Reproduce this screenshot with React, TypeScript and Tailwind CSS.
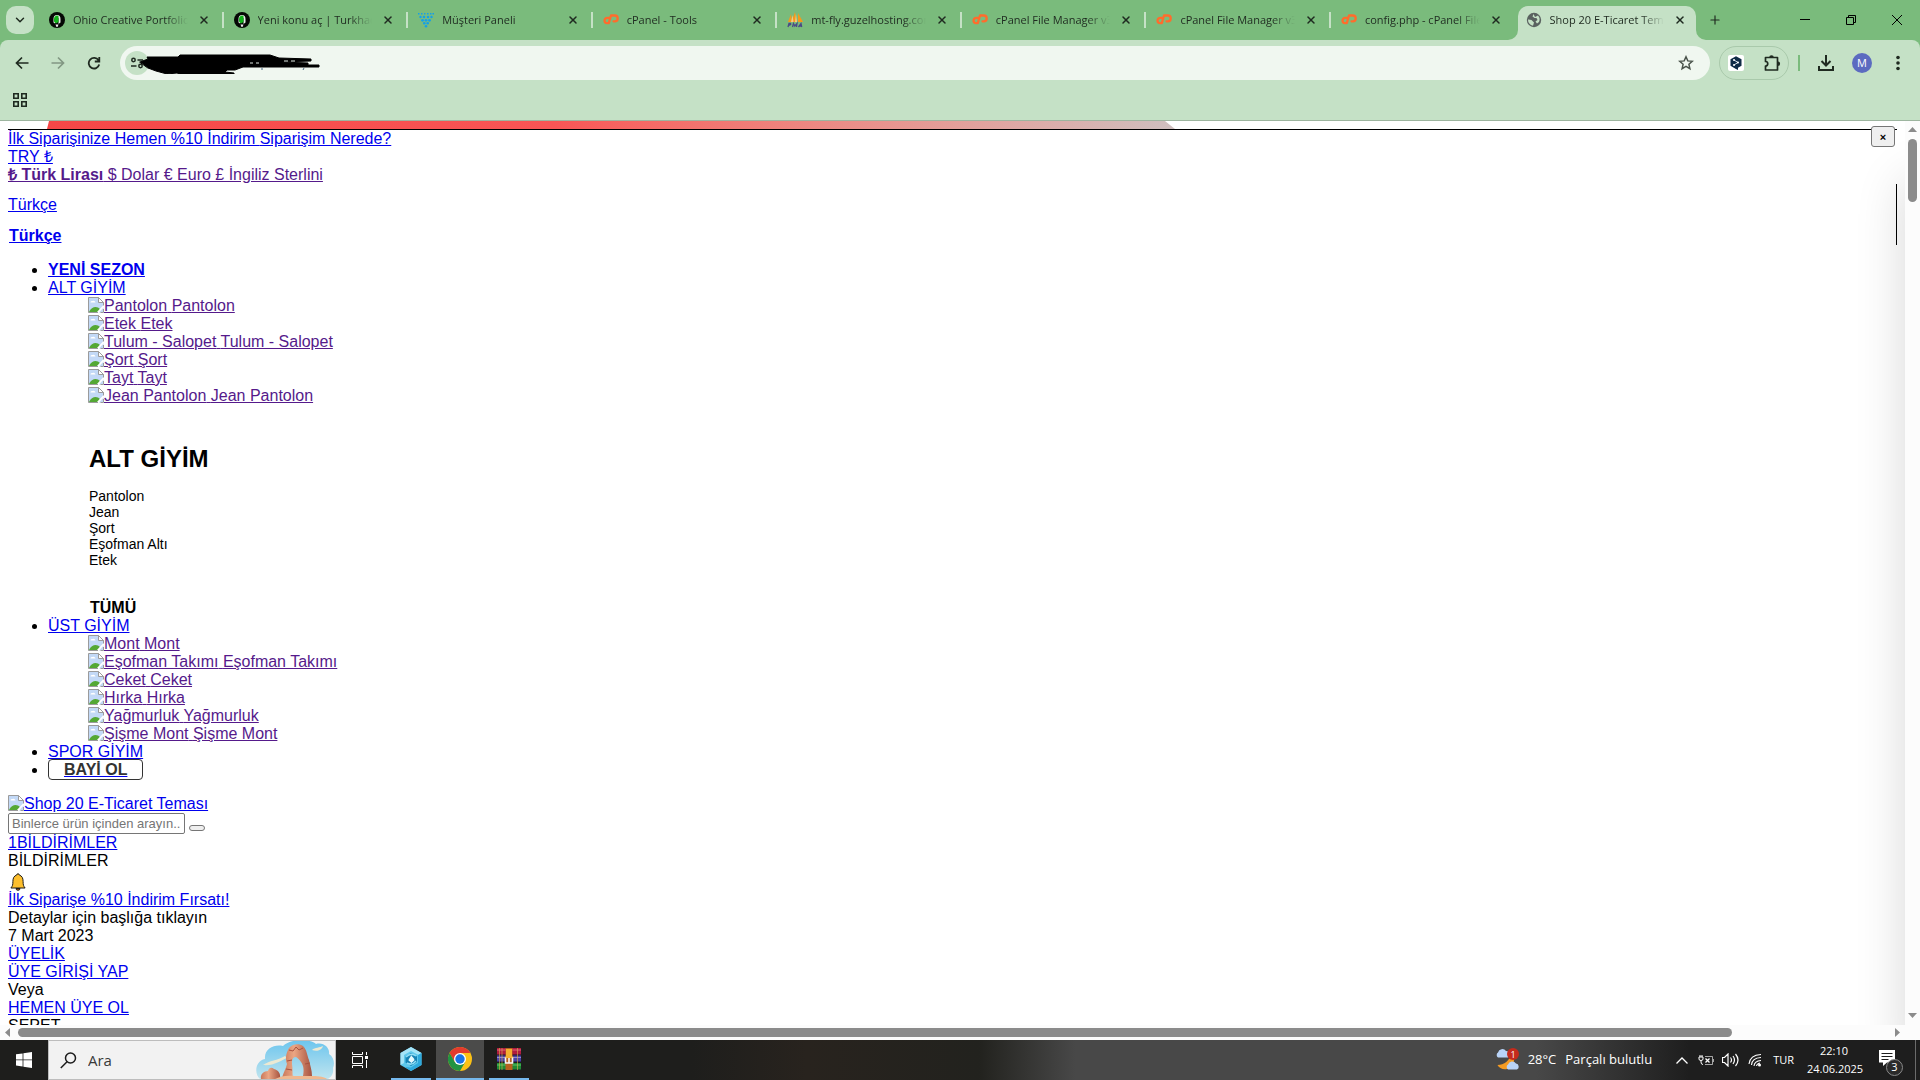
import { type ReactNode } from 'react'
import { ChevronDown, Plus, X } from 'lucide-react'

type TabIcon = 'forum' | 'dots' | 'cpanel' | 'pma' | 'globe'

const TABS: { title: string; icon: TabIcon }[] = [
  { title: 'Ohio Creative Portfolio Theme', icon: 'forum' },
  { title: 'Yeni konu aç | Turkhackteam', icon: 'forum' },
  { title: 'Müşteri Paneli', icon: 'dots' },
  { title: 'cPanel - Tools', icon: 'cpanel' },
  { title: 'mt-fly.guzelhosting.com', icon: 'pma' },
  { title: 'cPanel File Manager v3', icon: 'cpanel' },
  { title: 'cPanel File Manager v3', icon: 'cpanel' },
  { title: 'config.php - cPanel File', icon: 'cpanel' },
  { title: 'Shop 20 E-Ticaret Teması', icon: 'globe' },
]

const BOTTOMS = ['Pantolon', 'Etek', 'Tulum - Salopet', 'Şort', 'Tayt', 'Jean Pantolon']
const FEATURED = ['Pantolon', 'Jean', 'Şort', 'Eşofman Altı', 'Etek']
const TOPS = ['Mont', 'Eşofman Takımı', 'Ceket', 'Hırka', 'Yağmurluk', 'Şişme Mont']

export default function App() {
  return (
    <div className="flex h-screen flex-col overflow-hidden bg-white font-['Open_Sans',sans-serif] text-black">
      <TabStrip />
      <Toolbar />
      <Viewport />
      <Taskbar />
    </div>
  )
}

function TabStrip() {
  return (
    <header className="flex h-10 shrink-0 bg-[#7abb7c] text-[#1f2a20]">
      <button aria-label="Sekmelerde ara" className="mt-[6px] ml-[6px] flex size-7 items-center justify-center rounded-[10px] bg-[#c5e1c6]">
        <ChevronDown size={14} strokeWidth={2.5} />
      </button>
      <div className="ml-[5px] flex min-w-0 flex-1">
        {TABS.map((tab, i) => (
          <Tab key={i} {...tab} active={i === TABS.length - 1} separator={i < TABS.length - 2} />
        ))}
      </div>
      <div className="flex w-[220px] shrink-0 items-center">
        <button aria-label="Yeni sekme" className="ml-[7px] flex size-4 items-center justify-center">
          <Plus size={14} strokeWidth={2} />
        </button>
        <div className="ml-auto flex text-black">
          <button aria-label="Simge durumuna küçült" className="flex h-10 w-[46px] items-center justify-center">
            <svg width="10" height="10"><path d="M0 4.500h10" stroke="currentColor" /></svg>
          </button>
          <button aria-label="Geri yükle" className="flex h-10 w-[46px] items-center justify-center">
            <svg width="10" height="10" fill="none" stroke="currentColor">
              <path d="M.5 2.500h7v7h-7zM2.500 2.500v-2h7v7h-2" />
            </svg>
          </button>
          <button aria-label="Kapat" className="flex h-10 w-[46px] items-center justify-center">
            <svg width="10" height="10" stroke="currentColor"><path d="M0 0l10 10M10 0L0 10" /></svg>
          </button>
        </div>
      </div>
    </header>
  )
}

interface TabProps {
  title: string
  icon: TabIcon
  active: boolean
  separator: boolean
}

function Tab({ title, icon, active, separator }: TabProps) {
  return (
    <div className="relative flex min-w-0 flex-1 items-start">
      {active && (
        <>
          <div className="absolute top-[6px] right-1 bottom-0 left-0.5 rounded-t-[10px] bg-[#c5e1c6]" />
          <svg className="absolute -left-2 bottom-0" width="10" height="10">
            <path d="M10 0v10H0A10 10 0 0 0 10 0z" fill="#c5e1c6" />
          </svg>
          <svg className="absolute -right-1.5 bottom-0" width="10" height="10">
            <path d="M0 0v10h10A10 10 0 0 1 0 0z" fill="#c5e1c6" />
          </svg>
        </>
      )}
      <div className="relative flex h-10 min-w-0 flex-1 items-center pl-[10px]">
        <Favicon icon={icon} />
        <span className="ml-2 min-w-0 flex-1 overflow-hidden mask-[linear-gradient(to_right,#000_80%,transparent)] text-[11px] leading-4 whitespace-nowrap">
          {title}
        </span>
        <button aria-label="Sekmeyi kapat" className="mr-[10px] ml-2 flex size-4 items-center justify-center">
          <X size={12} strokeWidth={3} />
        </button>
        {separator ? <i className="h-4 w-0.5 bg-[#c5e1c6]" /> : <i className="w-0.5" />}
      </div>
    </div>
  )
}

function Favicon({ icon }: { icon: TabIcon }) {
  if (icon === 'forum') {
    return (
      <svg className="shrink-0" width="16" height="16" viewBox="0 0 16 16">
        <circle cx="8" cy="8" r="8" fill="#050805" />
        <path d="M4.500 10.500V7a3.500 4 0 0 1 7 0v3.500L9.500 12V5.500L6 11.500z" fill="#e8eee8" />
        <path d="M5 9.500V6.500a3 3.200 0 0 1 4.500-2.500v6L7 11.500z" fill="#12b31a" />
        <path d="M6.500 12.500h3L8.500 15h-1z" fill="#f4f4f4" />
      </svg>
    )
  }
  if (icon === 'dots') {
    return (
      <svg className="shrink-0" width="16" height="16" viewBox="0 0 16 16" fill="#14a0e8">
        <path d="M0 1h1.500v1.500H0zM3 1h1.500v1.500H3zM6 1h1.500v1.500H6zM9 1h1.500v1.500H9zM12 1h1.500v1.500H12zM14.500 1H16v1.500h-1.500z" />
        <circle cx="2.500" cy="5" r="1.200" /><circle cx="6" cy="5" r="1.300" /><circle cx="10" cy="5" r="1.300" /><circle cx="13.500" cy="5" r="1.200" />
        <circle cx="4.500" cy="8.300" r="1.400" /><circle cx="8" cy="8.300" r="1.400" /><circle cx="11.500" cy="8.300" r="1.400" />
        <circle cx="6.300" cy="11.300" r="1.300" /><circle cx="9.700" cy="11.300" r="1.300" /><circle cx="8" cy="14.300" r="1.300" />
      </svg>
    )
  }
  if (icon === 'cpanel') {
    return (
      <svg className="shrink-0" width="16" height="16" viewBox="0 0 16 16" fill="none" stroke="#ff6c2c" strokeWidth="2.300" strokeLinecap="round">
        <path d="M6 5.800H4.200a2.600 2.600 0 0 0 0 5.300h1.600L8 3.500h3.800a2.900 2.900 0 0 1 0 5.800H10.500" strokeLinejoin="round" />
      </svg>
    )
  }
  if (icon === 'pma') {
    return (
      <svg className="shrink-0" width="16" height="16" viewBox="0 0 16 16">
        <path d="M4 2L1 10h4zM8 0L4.500 10H10zM11 1v9h5z" fill="#f59a1c" />
        <path d="M5.500 3L4 10h2.500zM9 2l-1 8h2z" fill="#f7c987" />
        <path d="M1 15l1-3.500h1.500q1 1-1.800 1.800M5.500 15l1-3.500 1.300 2.500L10 11.500 9.500 15M11.500 15l2.500-3.500.7 3.500M12.500 14h2" stroke="#4b4a86" strokeWidth="1.300" fill="none" />
      </svg>
    )
  }
  return (
    <svg className="shrink-0" width="16" height="16" viewBox="0 0 16 16">
      <circle cx="8" cy="8" r="7.200" fill="#5a6260" />
      <path d="M2.500 7.500l3 .5 2.500 2.500-1 3.200A6 6 0 0 1 2 7.500zM7.500 2l-1 2.500 2 1.500h2l1 2-2 1.500 1.500 2 2-1.500a6 6 0 0 0-1-6.500L9 5z" fill="#c5e1c6" />
    </svg>
  )
}

function Toolbar() {
  return (
    <div className="shrink-0 bg-[#7abb7c]">
      <div className="rounded-t-[8px] border-b border-[#9db59f] bg-[#c5e1c6] pt-[6px] text-[#1f2a20]">
        <div className="flex h-[34px] items-center pl-[13px]">
          <button aria-label="Geri" className="flex size-[18px] items-center justify-center"><Arrow /></button>
          <button aria-label="İleri" className="ml-[18px] flex size-[18px] rotate-180 items-center justify-center opacity-40"><Arrow /></button>
          <button aria-label="Yenile" className="ml-[18px] flex size-[18px] items-center justify-center">
            <svg width="14" height="14" viewBox="0 0 14 14" fill="none" stroke="currentColor" strokeWidth="1.800">
              <path d="M11.500 4.300A5.300 5.300 0 1 0 12.200 8.500M12.300 1v4.500H7.800" />
            </svg>
          </button>
          <div className="relative ml-[17px] flex h-[34px] min-w-0 flex-1 items-center rounded-full bg-[#f0f7f0] pl-[5px]">
            <button aria-label="Site bilgileri" className="flex size-6 shrink-0 items-center justify-center rounded-full bg-[#c5e1c6]">
              <svg width="14" height="14" viewBox="0 0 14 14" fill="none" stroke="currentColor" strokeWidth="1.500">
                <circle cx="3.500" cy="4" r="1.700" /><circle cx="10.500" cy="10" r="1.700" /><path d="M7.500 4H13M1 10h5.500" />
              </svg>
            </button>
            <input aria-label="Adres çubuğu" className="h-6 min-w-0 flex-1 bg-transparent px-2 outline-none" />
            {/* blacked out address */}
            <svg className="absolute top-[8px] left-[18px]" width="184" height="20" viewBox="0 0 184 20">
              <path d="M2 8l8-3-1-2h31l2-2h90l9 3 32 1v2l-30 1 27 1v2h11v2h-76l-8 3h-8l-2 2 9 1v2H44l-5-2-10 1-11-3-8-3z" fill="#000" stroke="#000" strokeLinejoin="round" strokeLinecap="round" />
              <path d="M112 9h3M118 9h3M146 7h4M153 7h4" stroke="#dfe8e2" strokeWidth="1" />
              <path d="M124 14v2M166 14l-1 2" stroke="#4a6a85" />
            </svg>
            <button aria-label="Yer işareti ekle" className="mr-4 flex size-4 items-center justify-center text-[#4a534b]">
              <svg width="16" height="16" viewBox="0 0 16 16" fill="none" stroke="currentColor" strokeWidth="1.500">
                <path d="M8 1.800l1.800 4.100 4.500.4-3.400 3 1 4.400L8 11.400l-3.900 2.300 1-4.400-3.400-3 4.500-.4z" />
              </svg>
            </button>
          </div>
          <div className="ml-[9px] flex h-[34px] w-[70px] items-center justify-between rounded-full border border-[#a9c9ab] px-2">
            <button aria-label="Çeviri" className="flex size-4 items-center justify-center rounded-xs bg-white">
              <svg width="12" height="14" viewBox="0 0 12 14">
                <path d="M6 .3l5.500 3v6.500L8 11.700V14l-2.500-1.300L.5 9.800V3.300z" fill="#0f2b46" />
                <path d="M4 4l4 2.500L4 9" stroke="#d5e0ea" fill="none" />
                <circle cx="4" cy="4" r="1" fill="#fff" /><circle cx="8" cy="6.500" r="1" fill="#fff" /><circle cx="4" cy="9" r="1" fill="#fff" />
              </svg>
            </button>
            <button aria-label="Uzantılar" className="flex size-4 items-center justify-center">
              <svg width="18" height="18" viewBox="0 0 18 18" className="shrink-0">
                <path d="M2.500 3.500H14.500v12.500H2.500v-4a2.200 2.200 0 0 0 0-4.500z" fill="none" stroke="currentColor" strokeWidth="1.700" strokeLinejoin="round" />
                <path d="M6.200 3.500a2.300 2.300 0 0 1 4.600 0zM14.800 7.400a2.300 2.300 0 0 1 0 4.600z" fill="currentColor" />
              </svg>
            </button>
          </div>
          <i className="ml-[9px] h-4 w-0.5 bg-[#7abb7c]" />
          <button aria-label="İndirilenler" className="ml-[18px] size-4">
            <svg width="16" height="16" viewBox="0 0 16 16" fill="none" stroke="currentColor" strokeWidth="2">
              <path d="M8 0v10M3.500 6L8 10.500 12.500 6M1 11v4h14v-4" />
            </svg>
          </button>
          <button className="ml-[18px] flex size-5 items-center justify-center rounded-full bg-[#5c6bc0] text-[11px] text-white">M</button>
          <button aria-label="Menü" className="mr-[14px] ml-[18px] flex size-4 items-center justify-center">
            <svg width="4" height="16" fill="currentColor">
              <circle cx="2" cy="2.500" r="1.800" /><circle cx="2" cy="8" r="1.800" /><circle cx="2" cy="13.500" r="1.800" />
            </svg>
          </button>
        </div>
        <div className="flex h-10 items-center pl-[13px]">
          <button aria-label="Uygulamalar" className="size-[14px]">
            <svg width="14" height="14" fill="none" stroke="currentColor" strokeWidth="1.600">
              <path d="M.8.8h4.400v4.400H.8zM8.800.8h4.400v4.400H8.800zM.8 8.800h4.400v4.400H.8zM8.800 8.800h4.400v4.400H8.800z" />
            </svg>
          </button>
        </div>
      </div>
    </div>
  )
}

function Arrow() {
  return (
    <svg width="14" height="14" viewBox="0 0 14 14" fill="none" stroke="currentColor" strokeWidth="1.700">
      <path d="M13.500 7H1.500M7 1.500L1.500 7 7 12.500" />
    </svg>
  )
}

function Viewport() {
  return (
    <div className="grid min-h-0 flex-1 grid-cols-[1fr_15px] grid-rows-[1fr_15px] bg-[#fcfcfc]">
      <main className="relative overflow-hidden bg-white px-2 font-['Liberation_Sans',Arial,sans-serif] text-base leading-[18px]">
        <div className="ml-[39px] h-2 w-[1128px] bg-linear-to-r from-[#f54747] via-[#f95555] via-45% to-[#cfbfbf] [clip-path:polygon(2px_0,1118px_0,100%_100%,0_100%)]" />
        <hr className="border-black" />
        <ShopPage />
        <button className="absolute top-[5px] right-[10px] flex h-[21px] w-6 items-center justify-center rounded-[3px] border border-[#767676] bg-[#efefef] text-[11px] font-bold">
          ×
        </button>
        <div className="absolute top-[63px] right-2 h-[61px] w-px bg-black" />
        <div className="absolute top-[60px] -bottom-10 left-full w-20 shadow-[0_0_50px_rgba(0,0,0,0.16)]" />
      </main>
      <div className="flex flex-col items-center justify-between pt-[6px] pb-[7px]">
        <svg width="9" height="5" fill="#8b8b8b"><path d="M0 5l4.500-5L9 5z" /></svg>
        <div className="mt-[7px] mb-auto h-[63px] w-[9px] rounded-full bg-[#8b8b8b]" />
        <svg width="9" height="5" fill="#8b8b8b"><path d="M0 0l4.500 5L9 0z" /></svg>
      </div>
      <div className="flex items-center px-[5px]">
        <svg width="5" height="9" fill="#8b8b8b"><path d="M5 0L0 4.500 5 9z" /></svg>
        <div className="mr-[163px] ml-2 h-[9px] flex-1 rounded-full bg-[#8b8b8b]" />
        <svg width="5" height="9" fill="#8b8b8b"><path d="M0 0l5 4.500L0 9z" /></svg>
      </div>
    </div>
  )
}

function Link({ children, visited, bold }: { children: ReactNode; visited?: boolean; bold?: boolean }) {
  return (
    <a href="#" className={`underline ${visited ? 'text-[#551a8b]' : 'text-[#0000ee]'} ${bold ? 'font-bold' : ''}`}>
      {children}
    </a>
  )
}

function BrokenImage() {
  return (
    <svg className="inline-block align-top" width="16" height="16" viewBox="0 0 16 16">
      <path d="M.5.5h10l5 5v10H.5z" fill="#c3d9f7" />
      <path d="M2.500 5.500a1.500 1.500 0 0 1 2-1.500 2 2 0 0 1 3 1.500z" fill="#fff" />
      <path d="M1 15c2-4.500 6-6 9-4.500l2 1.500-2 3z" fill="#54a834" />
      <path d="M16 7.500V10l-5.500 6H8z" fill="#fff" />
      <path d="M10 15.500H.5V.5h10l5 5v3M15.500 12v3.500h-3" fill="none" stroke="#9b9b9b" />
      <path d="M10.500.5v5h5z" fill="#fff" stroke="#9b9b9b" />
    </svg>
  )
}

function CategoryLinks({ items }: { items: string[] }) {
  return (
    <ul className="ml-10">
      {items.map((item) => (
        <li key={item} className="list-none">
          <Link visited><BrokenImage />{item} {item}</Link>
        </li>
      ))}
    </ul>
  )
}

function ShopPage() {
  return (
    <div className="whitespace-nowrap">
      <p><Link>İlk Siparişinize Hemen %10 İndirim </Link><Link>Siparişim Nerede?</Link></p>
      <p><Link>TRY ₺</Link></p>
      <p><Link visited><b>₺ Türk Lirası</b> $ Dolar € Euro £ İngiliz Sterlini</Link></p>
      <p className="mt-3"><Link>Türkçe</Link></p>
      <p className="mt-[13px] pl-px"><Link bold>Türkçe</Link></p>

      <ul className="mt-4 list-disc pl-10">
        <li><Link bold>YENİ SEZON</Link></li>
        <li>
          <Link>ALT GİYİM</Link>
          <CategoryLinks items={BOTTOMS} />
          <div className="mt-10 ml-[41px]">
            <h2 className="text-2xl leading-7 font-bold">ALT GİYİM</h2>
            <div className="mt-[15px] text-sm leading-4">
              {FEATURED.map((item) => <p key={item}>{item}</p>)}
            </div>
            <p className="mt-[31px] pl-px font-bold">TÜMÜ</p>
          </div>
        </li>
        <li>
          <Link>ÜST GİYİM</Link>
          <CategoryLinks items={TOPS} />
        </li>
        <li><Link>SPOR GİYİM</Link></li>
        <li>
          <a href="#" className="rounded-sm border border-[#333] px-[15px] pt-px pb-px font-bold text-[#333] underline decoration-[#0000ee]">BAYİ OL</a>
        </li>
      </ul>

      <p className="mt-4"><Link><BrokenImage />Shop 20 E-Ticaret Teması</Link></p>
      <form className="flex items-end" onSubmit={(e) => e.preventDefault()}>
        <input
          aria-label="Ürün ara"
          placeholder="Binlerce ürün içinden arayın..."
          className="h-[21px] w-[177px] rounded-xs border border-[#767676] px-[3px] text-[13px] leading-4 placeholder:text-[#757575]"
        />
        <button aria-label="Ara" className="mb-[3px] ml-1 h-[6px] w-4 rounded-[3px] border border-[#767676] bg-[#efefef]" />
      </form>
      <p><Link>1BİLDİRİMLER</Link></p>
      <p>BİLDİRİMLER</p>
      <svg className="mt-[3px] ml-0.5" width="16" height="18" viewBox="0 0 16 18">
        <path d="M8 .8c.9 0 1.400.6 1.400 1.300 2.600.8 3.700 3 3.700 6.400 0 3.500.4 4.500 2 6.500H.9c1.600-2 2-3 2-6.500 0-3.400 1.100-5.600 3.700-6.400C6.600 1.400 7.100.8 8 .8z" fill="#fdbf2d" stroke="#1c1c1c" />
        <path d="M6 15.500a2 1.800 0 0 0 4 0z" fill="#b5591a" stroke="#1c1c1c" />
      </svg>
      <p><Link>İlk Siparişe %10 İndirim Fırsatı!</Link></p>
      <p>Detaylar için başlığa tıklayın</p>
      <p>7 Mart 2023</p>
      <p><Link>ÜYELİK</Link></p>
      <p><Link>ÜYE GİRİŞİ YAP</Link></p>
      <p>Veya</p>
      <p><Link>HEMEN ÜYE OL</Link></p>
      <p>SEPET</p>
    </div>
  )
}

function Taskbar() {
  return (
    <footer className="flex h-10 shrink-0 bg-[linear-gradient(to_right,#1e1e1c_0%,#1e1e1c_36%,#28231e_42%,#22221e_51%,#484848_56%,#484848_80%,#1e1e1e_88%)] text-white">
      <button aria-label="Başlat" className="flex w-12 items-center justify-center">
        <svg width="16" height="16" viewBox="0 0 16 16" fill="#fff">
          <path d="M0 2.300L6.600 1.400v6.100H0zM7.400 1.300L16 0v7.500H7.400zM0 8.300h6.600v6.200L0 13.600zM7.400 8.300H16V16l-8.600-1.200z" />
        </svg>
      </button>
      <label className="relative flex w-[288px] items-center border border-[#bdbdbd] bg-[#f2f2f2] pl-[11px] text-[#2b2b2b]">
        <svg className="shrink-0" width="17" height="17" viewBox="0 0 17 17" fill="none" stroke="#1c1c1c" strokeWidth="1.500">
          <circle cx="10.500" cy="6" r="5" /><path d="M7 9.800L.8 16" />
        </svg>
        <input aria-label="Ara" placeholder="Ara" className="ml-[11px] w-32 bg-transparent text-[15px] leading-5 outline-none placeholder:text-[#3a3a3a]" />
        <ArchPicture />
      </label>
      <button aria-label="Görev görünümü" className="flex w-12 items-center justify-center">
        <svg width="17" height="16" viewBox="0 0 17 16" fill="none" stroke="#fff">
          <path d="M.5 0v2.500h10V0M.5 16v-2.500h10V16M.5 4.500h10v7H.5zM14.500 0v3M14.500 8v8" />
          <path d="M13 4h3v3h-3z" fill="#fff" stroke="none" />
        </svg>
      </button>
      <button aria-label="Uygulama" className="ml-[7px] flex w-10 items-center justify-center border-b-2 border-[#76b9ed]">
        <svg width="22" height="24" viewBox="0 0 22 24">
          <path d="M11 0l10.500 6v12L11 24 .5 18V6z" fill="#5cc8ec" />
          <path d="M.5 6L11 0l10.500 6-3 2L11 4 4 8v8l-3.500 2z" fill="#a5e4f7" />
          <path d="M21.500 6v12L11 24l-6-4 6 .5 7-4.500V8z" fill="#2ea9dc" />
          <path d="M11 6l6 3.500v5.500L11 19l-5.500-3.500V9.500z" fill="#1583b5" />
          <path d="M6 10q5-5 10-1M16 14q-4 5-9 2" stroke="#8fdcf4" strokeWidth="1.500" fill="none" />
          <path d="M11.500 8c0 2 3 2.500 3 5.200L11.500 16 8.500 13.500c0-2 1.500-2.500 3-5.500z" fill="#e4faff" />
        </svg>
      </button>
      <button aria-label="Google Chrome" className="ml-[5px] flex w-12 items-center justify-center border-b-2 border-[#76b9ed] bg-[#4b4b4a]">
        <svg width="24" height="24" viewBox="0 0 24 24">
          <circle cx="12" cy="12" r="12" fill="#fbc116" />
          <path d="M12 6h10.400A12 12 0 0 0 1.600 6l5.200 9z" fill="#e33b2e" />
          <path d="M6.800 15L1.600 6A12 12 0 0 0 12 24l5.200-9z" fill="#229342" />
          <circle cx="12" cy="12" r="6" fill="#fff" /><circle cx="12" cy="12" r="4.700" fill="#1a73e8" />
        </svg>
      </button>
      <button aria-label="WinRAR" className="ml-[5px] flex w-10 items-center justify-center border-b-2 border-[#76b9ed]">
        <svg width="24" height="22" viewBox="0 0 24 22">
          <path d="M0 0h24v7H0z" fill="#b01c3e" /><path d="M0 7.500h24V14H0z" fill="#4a42a5" /><path d="M0 15h24v7H0z" fill="#1f8a34" />
          <path d="M0 2h24" stroke="#e0627c" /><path d="M0 9.500h24" stroke="#8f88d8" /><path d="M0 17h24" stroke="#5cc46a" />
          <path d="M0 6.500h24M0 13.500h24M0 21.500h24" stroke="#1b1430" opacity=".5" />
          <path d="M2.500 0v22M5 0v22M20.500 0v22" stroke="#d9b44c" opacity=".6" />
          <path d="M8.500 0h7v22h-7z" fill="#b8601f" /><path d="M9 1h6v7l2 2H7.500L9 8z" fill="#f4b02f" />
          <path d="M8.500 9.500V15h7V9.500M12 10v5" stroke="#f4f4f4" strokeWidth="1.600" fill="none" />
        </svg>
      </button>

      <div className="ml-auto flex items-center text-[13px]">
        <button className="flex items-center">
          <svg width="26" height="24" viewBox="0 0 26 24">
            <path d="M16 5c5 4 4 14-4 16-4 1-8-1-9.500-4C9 17 15 13 16 5z" fill="#f59b22" />
            <path d="M3 9.500a3 3 0 0 1 0-5A4.500 4.500 0 0 1 11 3a3.500 3.500 0 0 1 2 6.500z" fill="#b9d3f7" />
            <path d="M13 21.500a3 3 0 0 1 0-5 4.500 4.500 0 0 1 8-1 3.200 3.200 0 0 1 1 6z" fill="#b9d3f7" />
            <circle cx="18" cy="6" r="6" fill="#c42b1c" />
            <text x="18" y="9.500" fontSize="9" textAnchor="middle" fill="#fff">1</text>
          </svg>
          <span className="ml-[7px]">28°C</span>
          <span className="ml-[9px]">Parçalı bulutlu</span>
        </button>
        <button aria-label="Gizli simgeler" className="ml-6">
          <svg width="12" height="7" fill="none" stroke="#fff" strokeWidth="1.300"><path d="M.5 6.500L6 1l5.500 5.500" /></svg>
        </button>
        <svg className="ml-[10px]" width="16" height="12" viewBox="0 0 16 12" fill="none" stroke="#fff">
          <path d="M1 3v2q0 1.500 2 1.500T5 5V3zM2 1v2M4 1v2M3 6.500V8q0 2.500 2 2.500" />
          <path d="M7 2.500h7.500v8H7M15.500 5v3" opacity=".6" />
          <path d="M7.500 4.500l4 4M11.500 4.500l-4 4" strokeWidth="1.300" />
        </svg>
        <svg className="ml-2" width="17" height="14" viewBox="0 0 17 14" fill="none" stroke="#fff">
          <path d="M.5 4.500h2L6 1v12L2.500 9.500h-2zM8.500 4.500q2 2.500 0 5M11 3q3 4 0 8M13.500 1q5 6 0 12" strokeWidth="1.200" />
        </svg>
        <svg className="ml-[9px]" width="14" height="14" viewBox="0 0 14 14" fill="none" stroke="#fff" strokeWidth="1.100">
          <path d="M1 11Q2 2 13 1.500M3.500 12Q4 5 13 4.500M6 13Q6.500 8 13 7.500M8.500 13Q9 10.500 12 10" /><circle cx="11.500" cy="12" r="1.500" fill="#fff" stroke="none" />
        </svg>
        <span className="ml-[11px] text-[11px]">TUR</span>
        <time className="ml-[13px] w-[54px] text-center text-[11px] leading-[18px]">22:10<br />24.06.2025</time>
        <button className="relative mr-3 ml-[18px] h-10 w-6">
          <svg className="mb-1" width="16" height="17" viewBox="0 0 16 17">
            <path d="M0 0h16v12.500H8L4 16v-3.500H0z" fill="#fff" /><path d="M2.500 3.500h11M2.500 6.500h11M2.500 9.500h7" stroke="#1e1e1e" />
          </svg>
          <span className="absolute right-0 bottom-1 flex size-[17px] items-center justify-center rounded-full border border-[#8a8a8a] bg-[#2a2a2a] text-[11px]">3</span>
        </button>
        <i className="mr-1 h-10 w-px bg-[#6b6b6b]" />
      </div>
    </footer>
  )
}

function ArchPicture() {
  return (
    <svg className="absolute top-0 right-0" width="80" height="38" viewBox="0 0 80 38">
      <defs>
        <linearGradient id="sky" x2="0" y2="1"><stop stopColor="#6cc5ee" /><stop offset="1" stopColor="#bfe4ee" /></linearGradient>
        <linearGradient id="rock"><stop stopColor="#c9785a" /><stop offset=".4" stopColor="#eba683" /><stop offset="1" stopColor="#a65340" /></linearGradient>
      </defs>
      <path d="M5 38C-1 33 0 20 10 18 9 7 20 3 28 5 36-3 56-2 61 3c8-2 14 4 13 10 5 3 6 10 4 14 1 6-2 9-5 11z" fill="url(#sky)" />
      <path d="M8 24c7-5 14-4 22-9l2 2c-7 3-13 8-24 7zM57 9c3-3 8-2 11-4-1 4-6 6-11 4z" fill="#ece9d2" />
      <path d="M6 38c-1-5 3-8 7-8 1-4 4-4 6-2 4 1 7 4 6 10z" fill="url(#rock)" />
      <path d="M27 37c1-5 4-9 5-14-2-5-1-11 2-16 3-4 10-5 14-2 4 4 4 9 6 14 1 5 3 10 3 16h-9c1-5 1-10-2-14-2-3-4-5-6-5-3 1-3 4-3 7 1 5 0 10 1 14z" fill="url(#rock)" />
      <path d="M34 9l4 1 3-4 3 3 4-2M31 28l6 1M50 23l5-1M32 20l5-1" stroke="#a9523f" fill="none" />
      <path d="M20 38c5-3 12-4 20-3h18c6 0 12 1 14 3z" fill="#f0b88f" />
    </svg>
  )
}
